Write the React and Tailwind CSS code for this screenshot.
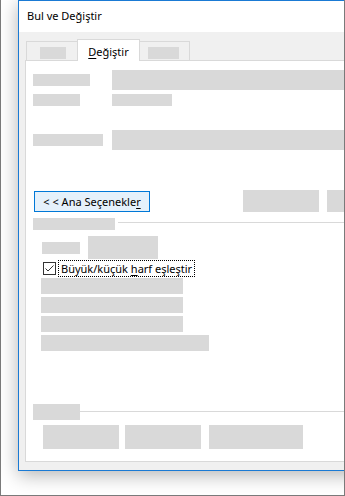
const font = { fontFamily: '"Noto Sans", "Open Sans", sans-serif' };

function Block({ className }) {
  return <div className={`bg-[#d9d9d9] ${className}`} />;
}

export default function App() {
  return (
    <div
      className="w-[345px] h-[496px] overflow-hidden border-l border-r border-b border-[#7a7a7a] bg-white"
      style={font}
    >
      <div className="pl-[17px]">
        <div className="w-[420px] border border-[#1a7ad4] bg-[#f0f0f0] shadow-[0_4px_18px_rgba(0,0,0,0.3)]">
          {/* title bar */}
          <div className="h-[31px] bg-white pl-[8px] flex items-center text-[11px] text-black">
            Bul ve Değiştir
          </div>

          <div className="pl-[6px] pr-[6px] pt-[7px] pb-[8px]">
            {/* tabs */}
            <div className="flex items-end h-[22px]">
              <div className="w-[1px] h-[1px] bg-[#d9d9d9]" />
              <div className="w-[51px] h-[20px] border-t border-l border-b border-[#d9d9d9] pl-[13px] pt-[5px]">
                <Block className="w-[26px] h-[12px]" />
              </div>
              <div className="w-[63px] h-[22px] border-t border-l border-r border-[#d9d9d9] bg-white flex justify-center pt-[4px] text-[11px] leading-[15px] text-black">
                <span>
                  <span className="underline underline-offset-2">D</span>eğiştir
                </span>
              </div>
              <div className="w-[50px] h-[20px] border-t border-r border-b border-[#d9d9d9] pl-[8px] pt-[5px]">
                <Block className="w-[31px] h-[12px]" />
              </div>
              <div className="flex-1 h-[1px] bg-[#d9d9d9]" />
            </div>

            {/* panel */}
            <div className="border-l border-r border-b border-[#d9d9d9] bg-white pl-[7px] pr-[7px] pb-[12px] flex flex-col">
              <div className="mt-[9px] h-[20px] flex items-center">
                <div className="w-[79px]">
                  <Block className="w-[57px] h-[12px]" />
                </div>
                <Block className="flex-1 h-[20px]" />
              </div>
              <div className="mt-[4px] h-[12px] flex items-center">
                <div className="w-[79px]">
                  <Block className="w-[47px] h-[12px]" />
                </div>
                <Block className="w-[60px] h-[12px]" />
              </div>
              <div className="mt-[24px] h-[20px] flex items-center">
                <div className="w-[79px]">
                  <Block className="w-[70px] h-[12px]" />
                </div>
                <Block className="flex-1 h-[20px]" />
              </div>

              {/* buttons row */}
              <div className="mt-[40px] h-[22px] flex items-end">
                <button className="ml-[1px] w-[116px] h-[21px] border border-[#0078d7] bg-[#e5f1fb] text-[11px] leading-none text-black flex items-center justify-center">
                  <span>
                    &lt; &lt; Ana Seçenekle<span className="underline underline-offset-2">r</span>
                  </span>
                </button>
                <Block className="ml-[93px] w-[76px] h-[22px]" />
                <Block className="ml-[8px] flex-1 h-[22px]" />
              </div>

              {/* section 1 */}
              <div className="mt-[6px] h-[12px] flex items-start">
                <Block className="w-[82px] h-[12px]" />
                <div className="ml-[3px] mt-[4px] flex-1 h-[1px] bg-[#d9d9d9]" />
              </div>
              <div className="mt-[6px] h-[23px] flex items-center pl-[9px]">
                <Block className="w-[38px] h-[12px]" />
                <Block className="ml-[8px] w-[70px] h-[23px]" />
              </div>
              <div className="mt-[1px] h-[16px] flex items-center pl-[10px]">
                <div className="w-[13px] h-[13px] border border-[#333] bg-white">
                  <svg width="11" height="11" viewBox="0 0 11 11" fill="none">
                    <polyline points="1.5,5.5 4,8 9.5,2.5" stroke="#333" strokeWidth="1" />
                  </svg>
                </div>
                <div className="ml-[2px] h-[17px] border border-dotted border-black px-[2px] flex items-center text-[11px] leading-none text-black">
                  <span>
                    Büyük/küçük <span className="underline underline-offset-2">h</span>arf eşleştir
                  </span>
                </div>
              </div>
              <div className="pl-[8px] flex flex-col gap-[3px] mt-[2px]">
                <Block className="w-[142px] h-[16px]" />
                <Block className="w-[142px] h-[16px]" />
                <Block className="w-[142px] h-[16px]" />
                <Block className="w-[168px] h-[16px]" />
              </div>

              {/* section 2 */}
              <div className="mt-[53px] h-[16px] flex items-start">
                <Block className="w-[47px] h-[16px]" />
                <div className="mt-[7px] flex-1 h-[1px] bg-[#d9d9d9]" />
              </div>
              <div className="mt-[5px] h-[24px] flex pl-[10px]">
                <Block className="w-[76px] h-[24px]" />
                <Block className="ml-[6px] w-[76px] h-[24px]" />
                <Block className="ml-[8px] w-[94px] h-[24px]" />
              </div>
            </div>
          </div>
        </div>
      </div>
    </div>
  );
}
